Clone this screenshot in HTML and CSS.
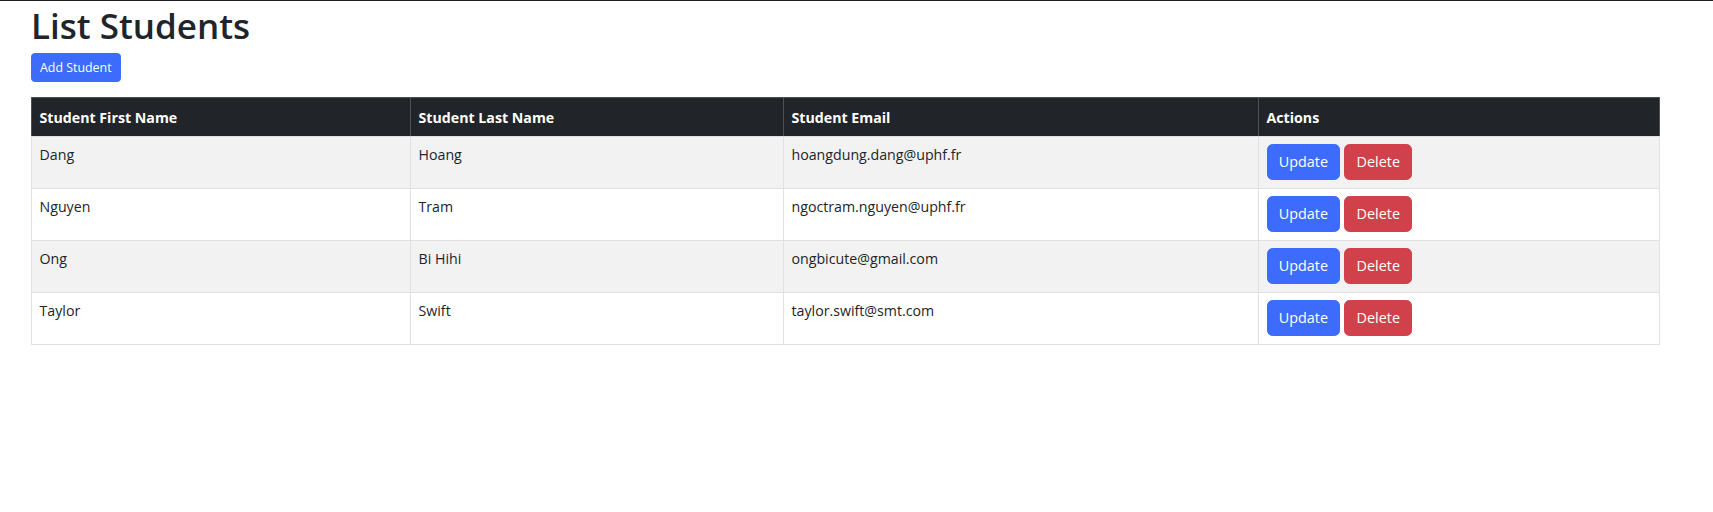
FILE: index.html
```html
<!DOCTYPE html>
<html lang="en">
<head>
<meta charset="utf-8">
<title>List Students</title>
<link rel="stylesheet" href="styles.css">
</head>
<body>
<div class="page">
  <h1 class="title">List Students</h1>
  <div class="toolbar">
    <a class="btn btn-primary btn-sm" href="#">Add Student</a>
  </div>
  <table class="students">
    <colgroup>
      <col class="c-first">
      <col class="c-last">
      <col class="c-email">
      <col class="c-actions">
    </colgroup>
    <thead>
      <tr>
        <th>Student First Name</th>
        <th>Student Last Name</th>
        <th>Student Email</th>
        <th>Actions</th>
      </tr>
    </thead>
    <tbody>
      <tr class="striped">
        <td>Dang</td>
        <td>Hoang</td>
        <td>hoangdung.dang@uphf.fr</td>
        <td><div class="actions"><a class="btn btn-primary" href="#">Update</a><a class="btn btn-danger" href="#">Delete</a></div></td>
      </tr>
      <tr>
        <td>Nguyen</td>
        <td>Tram</td>
        <td>ngoctram.nguyen@uphf.fr</td>
        <td><div class="actions"><a class="btn btn-primary" href="#">Update</a><a class="btn btn-danger" href="#">Delete</a></div></td>
      </tr>
      <tr class="striped">
        <td>Ong</td>
        <td>Bi Hihi</td>
        <td>ongbicute@gmail.com</td>
        <td><div class="actions"><a class="btn btn-primary" href="#">Update</a><a class="btn btn-danger" href="#">Delete</a></div></td>
      </tr>
      <tr>
        <td>Taylor</td>
        <td>Swift</td>
        <td>taylor.swift@smt.com</td>
        <td><div class="actions"><a class="btn btn-primary" href="#">Update</a><a class="btn btn-danger" href="#">Delete</a></div></td>
      </tr>
    </tbody>
  </table>
</div>
</body>
</html>
```
FILE: styles.css
```css
html, body {
  margin: 0;
  padding: 0;
}

body {
  font-family: "Open Sans", "Noto Sans", "Liberation Sans", sans-serif;
  font-size: 14.2px;
  color: #212529;
  background: #fff;
  border-top: 1px solid #1e1e1e;
}

.page {
  padding-left: 31px;
}

.title {
  margin: 0 0 3px;
  font-size: 35px;
  line-height: 49px;
  font-weight: 600;
  color: #212529;
}

.toolbar {
  display: flex;
  margin-bottom: 15px;
}

.btn {
  display: inline-flex;
  align-items: center;
  justify-content: center;
  box-sizing: border-box;
  height: 36px;
  padding: 0 11.25px;
  border: 1px solid transparent;
  border-radius: 5.6px;
  font-size: 14.4px;
  color: #fff;
  text-decoration: none;
  white-space: nowrap;
}

.btn-sm {
  height: 29px;
  padding: 0 8px;
  font-size: 12.4px;
  border-radius: 3.75px;
}

.btn-primary {
  background: #3d6cfc;
  border-color: #3d6cfc;
}

.btn-danger {
  background: #d1414c;
  border-color: #d1414c;
}

.students {
  border-collapse: collapse;
  table-layout: fixed;
  width: 1628px;
}

.c-first { width: 379px; }
.c-last { width: 373px; }
.c-email { width: 475px; }
.c-actions { width: 401px; }

.students th,
.students td {
  border: 1px solid #dee2e6;
  text-align: left;
  vertical-align: top;
}

.students th {
  background: #212529;
  color: #fff;
  font-weight: 700;
  border-color: #4d5154;
  border-bottom-color: #dee2e6;
  padding: 8px 7.5px 7px;
  line-height: 23px;
}

.students td {
  padding: 7px 7.5px 8px;
  line-height: 22.5px;
  background: #fff;
}

.students tr.striped td {
  background: #f2f2f2;
}

.actions {
  display: flex;
  gap: 4px;
}
```
